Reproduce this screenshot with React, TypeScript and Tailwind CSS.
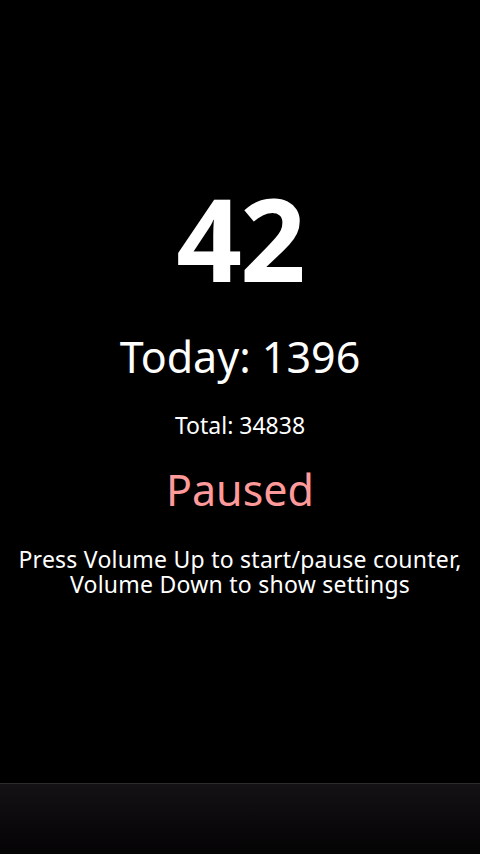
export default function App() {
  return (
    <div className="flex h-[854px] w-[480px] flex-col bg-black font-['Noto_Sans',sans-serif] text-white">
      <div className="flex flex-1 flex-col items-center">
        <div className="mt-[180px] text-[115px] font-bold leading-none tracking-[-2px]">42</div>
        <div className="mt-[40px] text-[43px] leading-none">Today: 1396</div>
        <div className="mt-[36px] text-[23px] leading-none">Total: 34838</div>
        <div className="mt-[31px] text-[43px] leading-none text-[#ff9a9a]">Paused</div>
        <div className="mt-[36px] text-center text-[23px] leading-[25px] tracking-[0.25px]">
          Press Volume Up to start/pause counter,
          <br />
          Volume Down to show settings
        </div>
      </div>
      <div className="h-[71px] border-t border-[#2c2a2c] bg-gradient-to-b from-[#141214] to-[#050405]" />
    </div>
  );
}
